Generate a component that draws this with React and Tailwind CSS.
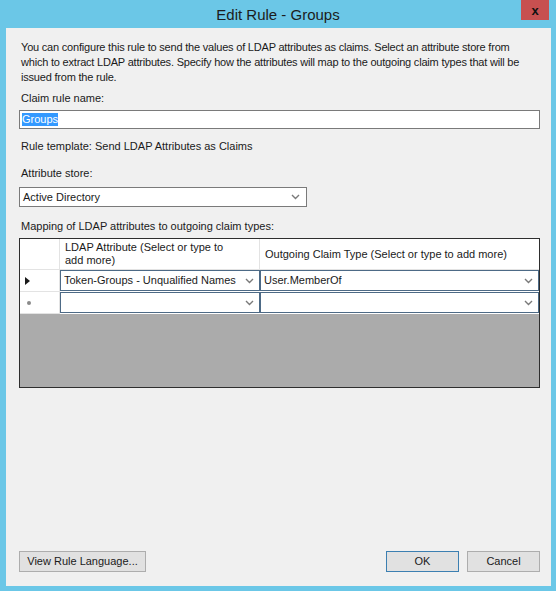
import React from 'react';

const font = { fontFamily: '"Liberation Sans", Arial, sans-serif' };

function Chevron() {
  return (
    <svg width="9" height="6" viewBox="0 0 9 6" className="shrink-0">
      <path d="M1 1 L4.5 4.5 L8 1" fill="none" stroke="#7a7a7a" strokeWidth="1.4" />
    </svg>
  );
}

function ComboCell({ value }) {
  return (
    <div className="flex h-[21px] items-center justify-between border border-[#4d6a86] bg-white pl-[3px] pr-[5px]">
      <span className="truncate">{value}</span>
      <Chevron />
    </div>
  );
}

export default function App() {
  return (
    <div
      className="flex h-[591px] w-[556px] flex-col bg-[#6bc7e7] text-[11px] leading-[13px] text-[#1a1a1a]"
      style={font}
    >
      {/* title bar */}
      <div className="relative flex h-[28px] shrink-0 items-center justify-center">
        <span className="text-[15px] text-[#1c1c1c]">Edit Rule - Groups</span>
        <div className="absolute right-[7px] top-0 flex h-[20px] w-[28px] items-center justify-center bg-[#c75050]">
          <span className="text-[13px] font-bold leading-none text-[#111]">x</span>
        </div>
      </div>

      {/* client area */}
      <div className="mb-[5px] ml-[6px] mr-[5px] flex flex-1 flex-col bg-[#f0f0f0] pl-[13px] pr-[11px] pt-[12px]">
        <p className="pl-[2px] leading-[15px] tracking-[-0.2px]">
          You can configure this rule to send the values of LDAP attributes as claims. Select an attribute store from
          <br />
          which to extract LDAP attributes. Specify how the attributes will map to the outgoing claim types that will be
          <br />
          issued from the rule.
        </p>

        <div className="mt-[7px] pl-[2px]">Claim rule name:</div>
        <div className="mt-[5px] flex h-[19px] items-center border border-[#7a7a7a] bg-white px-[2px]">
          <span className="bg-[#3399ff] text-white">Groups</span>
        </div>

        <div className="mt-[11px] pl-[2px]">Rule template: Send LDAP Attributes as Claims</div>

        <div className="mt-[14px] pl-[2px]">Attribute store:</div>
        <div className="mt-[7px] flex h-[20px] w-[288px] items-center justify-between border border-[#7a7a7a] bg-white pl-[3px] pr-[6px]">
          <span>Active Directory</span>
          <Chevron />
        </div>

        <div className="mt-[13px] pl-[2px]">Mapping of LDAP attributes to outgoing claim types:</div>

        {/* data grid */}
        <div className="mt-[5px] flex h-[150px] flex-col border border-[#2e2e2e] bg-[#ababab]">
          <div className="flex h-[31px] bg-white">
            <div className="w-[40px] border-b border-r border-[#e3e3e3]" />
            <div className="flex w-[200px] items-center border-b border-r border-[#e3e3e3] pl-[5px]">
              LDAP Attribute (Select or type to
              <br />
              add more)
            </div>
            <div className="flex flex-1 items-center border-b border-[#e3e3e3] pl-[5px]">
              Outgoing Claim Type (Select or type to add more)
            </div>
          </div>
          <div className="flex h-[22px] bg-white">
            <div className="flex w-[40px] items-center border-b border-r border-[#e3e3e3] pl-[5px]">
              <svg width="5" height="8" viewBox="0 0 5 8">
                <path d="M0 0 L5 4 L0 8 Z" fill="#1a1a1a" />
              </svg>
            </div>
            <div className="w-[200px]">
              <ComboCell value="Token-Groups - Unqualified Names" />
            </div>
            <div className="flex-1">
              <ComboCell value="User.MemberOf" />
            </div>
          </div>
          <div className="flex h-[22px] bg-white">
            <div className="flex w-[40px] items-center border-b border-r border-[#e3e3e3] pl-[7px]">
              <span className="h-[4px] w-[4px] rounded-full bg-[#8a8a8a]" />
            </div>
            <div className="w-[200px]">
              <ComboCell value="" />
            </div>
            <div className="flex-1">
              <ComboCell value="" />
            </div>
          </div>
        </div>

        {/* buttons */}
        <div className="mt-auto mb-[14px] flex items-center">
          <button className="h-[21px] w-[127px] border border-[#adadad] bg-[#e1e1e1]">View Rule Language...</button>
          <div className="flex-1" />
          <button className="h-[21px] w-[73px] border border-[#3c7fb1] bg-[#e1e1e1]">OK</button>
          <button className="ml-[8px] h-[21px] w-[73px] border border-[#adadad] bg-[#e1e1e1]">Cancel</button>
        </div>
      </div>
    </div>
  );
}
